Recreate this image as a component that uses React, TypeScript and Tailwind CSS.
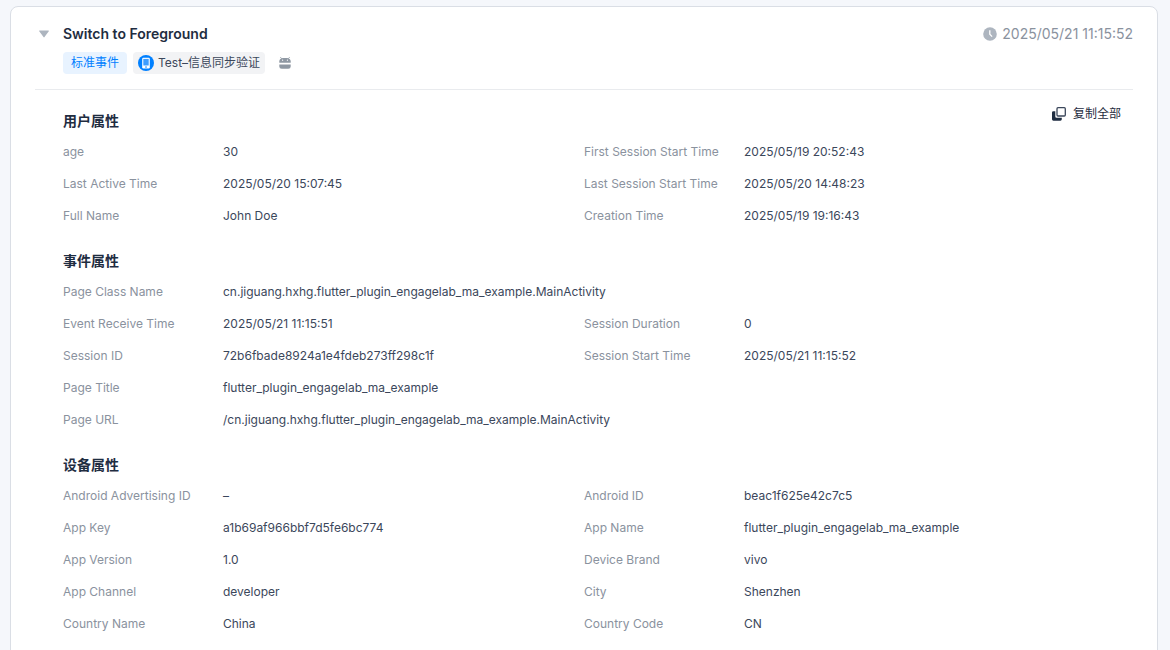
import React, { useState } from "react";

type Property = { label: string; value: string; full?: boolean };

const sections: { title: string; items: Property[] }[] = [
  {
    title: "用户属性",
    items: [
      { label: "age", value: "30" },
      { label: "First Session Start Time", value: "2025/05/19 20:52:43" },
      { label: "Last Active Time", value: "2025/05/20 15:07:45" },
      { label: "Last Session Start Time", value: "2025/05/20 14:48:23" },
      { label: "Full Name", value: "John Doe" },
      { label: "Creation Time", value: "2025/05/19 19:16:43" },
    ],
  },
  {
    title: "事件属性",
    items: [
      {
        label: "Page Class Name",
        value: "cn.jiguang.hxhg.flutter_plugin_engagelab_ma_example.MainActivity",
        full: true,
      },
      { label: "Event Receive Time", value: "2025/05/21 11:15:51" },
      { label: "Session Duration", value: "0" },
      { label: "Session ID", value: "72b6fbade8924a1e4fdeb273ff298c1f" },
      { label: "Session Start Time", value: "2025/05/21 11:15:52" },
      { label: "Page Title", value: "flutter_plugin_engagelab_ma_example", full: true },
      {
        label: "Page URL",
        value: "/cn.jiguang.hxhg.flutter_plugin_engagelab_ma_example.MainActivity",
        full: true,
      },
    ],
  },
  {
    title: "设备属性",
    items: [
      { label: "Android Advertising ID", value: "–" },
      { label: "Android ID", value: "beac1f625e42c7c5" },
      { label: "App Key", value: "a1b69af966bbf7d5fe6bc774" },
      { label: "App Name", value: "flutter_plugin_engagelab_ma_example" },
      { label: "App Version", value: "1.0" },
      { label: "Device Brand", value: "vivo" },
      { label: "App Channel", value: "developer" },
      { label: "City", value: "Shenzhen" },
      { label: "Country Name", value: "China" },
      { label: "Country Code", value: "CN" },
    ],
  },
];

function PhoneIcon() {
  return (
    <svg viewBox="0 0 16 16" className="h-4 w-4" aria-hidden="true">
      <circle cx="8" cy="8" r="8" fill="#0080ff" />
      <rect x="4.2" y="2.8" width="7.6" height="10.6" rx="1.2" fill="#fff" />
      <rect x="5.3" y="3.9" width="5.4" height="6.6" fill="#3d9dff" />
      <rect x="7" y="11.4" width="2" height="1.1" rx="0.5" fill="#0080ff" />
    </svg>
  );
}

function AndroidIcon() {
  return (
    <svg viewBox="0 0 12 12" className="h-3 w-3" fill="#8f98a3" aria-hidden="true">
      <path d="M1.4 0.2 2.6 1.6M10.6 0.2 9.4 1.6" stroke="#8f98a3" strokeWidth="0.9" />
      <path d="M0.3 5.8V4.6C0.3 2.6 1.9 1.1 4 1.1h4c2.1 0 3.7 1.5 3.7 3.5v1.2Z" />
      <path d="M0.3 7.4h11.4v2a2.4 2.4 0 0 1-2.4 2.4H2.7A2.4 2.4 0 0 1 0.3 9.4Z" />
      <circle cx="3.6" cy="3.2" r="0.6" fill="#fff" />
      <circle cx="8.4" cy="3.2" r="0.6" fill="#fff" />
    </svg>
  );
}

function ClockIcon() {
  return (
    <svg viewBox="0 0 14 14" className="h-3.5 w-3.5" aria-hidden="true">
      <circle cx="7" cy="7" r="6.8" fill="#adb5bf" />
      <path d="M6.8 3.2v4.1l2.3 2.3" fill="none" stroke="#fff" strokeWidth="1.3" />
    </svg>
  );
}

function CopyIcon() {
  return (
    <svg viewBox="0 0 14 14" className="h-3.5 w-3.5" aria-hidden="true">
      <path
        d="M1.4 4.2h1.9v5.2a1.3 1.3 0 0 0 1.3 1.3h5.2v1.6a1.4 1.4 0 0 1-1.4 1.4H1.4A1.4 1.4 0 0 1 0 12.3V5.6a1.4 1.4 0 0 1 1.4-1.4Z"
        fill="#1f2d41"
      />
      <rect x="5" y="0.7" width="8.3" height="8.3" rx="1" fill="#fff" stroke="#3b475b" strokeWidth="1.3" />
    </svg>
  );
}

function PropertyRow({ label, value, full }: Property) {
  return (
    <div className={`flex leading-8 ${full ? "col-span-2" : ""}`}>
      <dt className="w-40 shrink-0 text-[#8a929e]">{label}</dt>
      <dd className="min-w-0 text-[#3b475b]">{value}</dd>
    </div>
  );
}

export default function App() {
  const [open, setOpen] = useState(true);

  const copyAll = () => {
    const text = sections
      .flatMap((section) => section.items.map((item) => `${item.label}: ${item.value}`))
      .join("\n");
    navigator.clipboard?.writeText(text);
  };

  return (
    <div className="min-h-screen bg-[#f5f7fb] pt-1.5 pr-3 pl-2.5 font-[Inter,'Noto_Sans_CJK_SC',sans-serif] text-xs">
      <article className="min-h-screen rounded-lg border border-[#dadee5] bg-white px-6 pb-6">
        {/* Event header */}
        <header className="flex items-start justify-between border-b border-[#e9ebee] pt-4 pb-[15px]">
          <div className="flex">
            <button
              type="button"
              aria-label="Switch to Foreground"
              aria-expanded={open}
              onClick={() => setOpen(!open)}
              className="flex h-[22px] w-7 items-center pl-1"
            >
              <svg viewBox="0 0 10 8" className={`h-2 w-2.5 ${open ? "" : "-rotate-90"}`} aria-hidden="true">
                <path d="M0.6 0.5h8.8a.5.5 0 0 1 .4.8L5.5 7a.6.6 0 0 1-1 0L.2 1.3a.5.5 0 0 1 .4-.8Z" fill="#adb5bf" />
              </svg>
            </button>
            <div>
              <h2 className="text-sm leading-[22px] font-semibold text-[#1f2d41]">Switch to Foreground</h2>
              <div className="mt-[7px] flex items-center gap-1.5">
                <span className="flex h-[22px] items-center rounded bg-[#e8f3ff] px-2 text-[#0080ff]">标准事件</span>
                <span className="flex h-[22px] items-center gap-1 rounded bg-[#f2f3f5] px-[5px] text-[#3b475b]">
                  <PhoneIcon />
                  <span>Test–信息同步验证</span>
                </span>
                <span className="ml-2">
                  <AndroidIcon />
                </span>
              </div>
            </div>
          </div>
          <div className="flex items-center gap-[5px] text-sm leading-[22px] text-[#8a929e]">
            <ClockIcon />
            <time dateTime="2025-05-21T11:15:52">2025/05/21 11:15:52</time>
          </div>
        </header>

        {/* Property groups */}
        {open && (
          <div className="flex flex-col gap-3.5 pt-4 pr-3 pl-7">
            {sections.map((section, index) => (
              <section key={section.title}>
                <div className="flex items-start justify-between">
                  <h3 className="text-sm leading-[30px] font-bold text-[#1f2d41]">{section.title}</h3>
                  {index === 0 && (
                    <button
                      type="button"
                      onClick={copyAll}
                      className="flex cursor-pointer items-center gap-[7px] leading-4 text-[#1f2d41]"
                    >
                      <CopyIcon />
                      复制全部
                    </button>
                  )}
                </div>
                <dl className="mr-4 grid grid-cols-2">
                  {section.items.map((item) => (
                    <PropertyRow key={item.label} {...item} />
                  ))}
                </dl>
              </section>
            ))}
          </div>
        )}
      </article>
    </div>
  );
}
